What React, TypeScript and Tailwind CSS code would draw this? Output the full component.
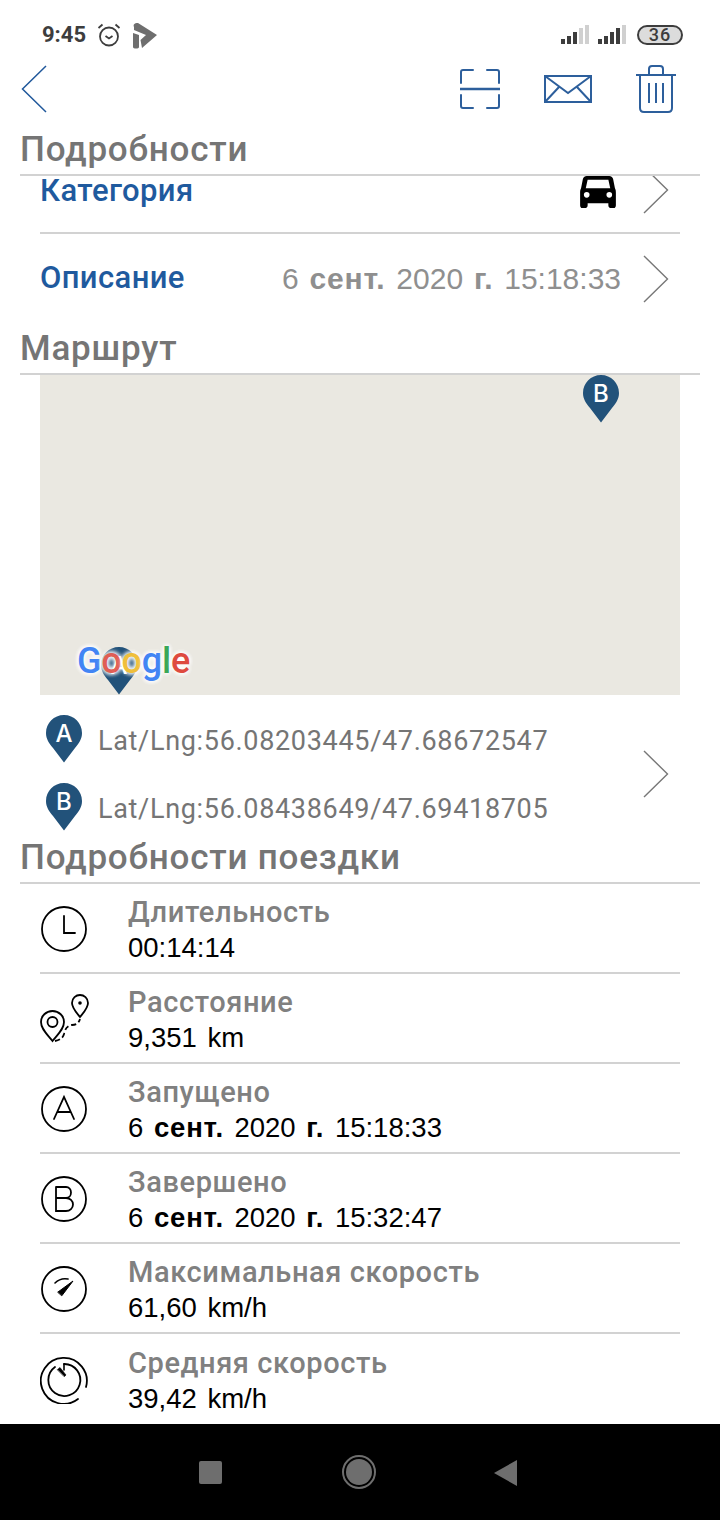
import type { ReactNode } from "react";

const roboto = "font-['Roboto',sans-serif]";
const helvetica = "font-['Liberation_Sans',Arial,sans-serif]";

function Chevron() {
  return (
    <svg width="26" height="48" viewBox="0 0 26 48" fill="none" stroke="#777777" strokeWidth="1.4">
      <path d="M1 1 L24.5 24 L1 47" />
    </svg>
  );
}

function Pin({ letter, size = 36 }: { letter: string; size?: number }) {
  return (
    <svg width={size} height={(size * 48) / 36} viewBox="0 0 36 48">
      <path d="M18 0 C8 0 0 8 0 18 C0 24 3 28 7 33 L18 47.500 L29 33 C33 28 36 24 36 18 C36 8 28 0 18 0 Z" fill="#22527a" />
      <text x="18" y="27" textAnchor="middle" fontFamily="Inter, sans-serif" fontWeight="500" fontSize="24" fill="#ffffff">
        {letter}
      </text>
    </svg>
  );
}

function Heading({ children }: { children: ReactNode }) {
  return (
    <div className="mx-5 border-b-2 border-[#d2d2d2] h-[38px] flex items-center shrink-0">
      <h2 className={`${roboto} text-[35px] leading-none font-medium tracking-[0.8px] text-[#757575] -mt-[13px]`}>{children}</h2>
    </div>
  );
}

function CircleIcon({ children }: { children: ReactNode }) {
  return (
    <svg width="48" height="48" viewBox="0 0 48 48" fill="none" stroke="#000000" strokeWidth="1.800" strokeLinecap="round">
      {children}
    </svg>
  );
}

const icons: Record<string, ReactNode> = {
  clock: (
    <CircleIcon>
      <circle cx="24" cy="24" r="22" />
      <path d="M24 11 V28 H35" />
    </CircleIcon>
  ),
  route: (
    <svg width="48" height="48" viewBox="0 0 48 48" fill="none" stroke="#000000" strokeWidth="1.800" className="overflow-visible">
      <path d="M12.500 46 C7 39 1 34 1 27 C1 21 6 16 12.500 16 C19 16 24 21 24 27 C24 34 18 39 12.500 46 Z" />
      <circle cx="12.500" cy="27" r="5" />
      <path d="M40 22 C36 17 32 13 32 8 C32 3 36 0 40 0 C44 0 48 3 48 8 C48 13 44 17 40 22 Z" />
      <circle cx="40" cy="8" r="1.800" fill="#000000" stroke="none" />
      <path d="M15 46 C20 45 23 43 24 39 C25 34 27 31 32 30 C36 30 39 28 40 24" strokeDasharray="5 3" />
    </svg>
  ),
  a: (
    <CircleIcon>
      <circle cx="24" cy="24" r="22" />
      <path d="M14 34 L24 12 L34 34 M17.500 27 H30.500" />
    </CircleIcon>
  ),
  b: (
    <CircleIcon>
      <circle cx="24" cy="24" r="22" />
      <path d="M16 12 V36 H26 C30 36 33 33 33 29.500 C33 26 30 23 26 23 H16 M26 23 C29 23 31 20.500 31 17.500 C31 14.500 29 12 26 12 H16" />
    </CircleIcon>
  ),
  gauge: (
    <CircleIcon>
      <circle cx="24" cy="24" r="22" />
      <path d="M15 18 C18 15 23 13 28 14" strokeWidth="1.600" />
      <path d="M18 27 L33 16 L22 30.500 Z" fill="#000000" strokeWidth="1" strokeLinejoin="round" />
    </CircleIcon>
  ),
  timer: (
    <CircleIcon>
      <path d="M46 31 A23 23 0 1 0 38 43" />
      <path d="M24 8 A16 16 0 1 1 15 11" />
      <path d="M24 8 V14" strokeWidth="1.600" />
      <path d="M17.500 13.500 L20 11.500 L26 19 L24.500 20.500 Z" fill="#000000" strokeWidth="0.600" />
    </CircleIcon>
  ),
};

function DateValue({ day, time, boldClass }: { day: string; time: string; boldClass: string }) {
  return (
    <>
      6 <b className={boldClass}>сент.</b> {day} <b className={boldClass}>г.</b> {time}
    </>
  );
}

function TripRow({ icon, label, children, last }: { icon: string; label: string; children: ReactNode; last?: boolean }) {
  return (
    <div className={`mx-10 h-[90px] flex items-center ${last ? "" : "border-b-2 border-[#d2d2d2]"}`}>
      <div className="w-[88px] shrink-0 mt-[2px]">{icons[icon]}</div>
      <div className="mt-[4px]">
        <div className={`${roboto} text-[29px] leading-[35px] font-medium tracking-[0.6px] text-[#808080]`}>{label}</div>
        <div className={`${helvetica} text-[27.5px] leading-[35px] [word-spacing:3px] text-black`}>{children}</div>
      </div>
    </div>
  );
}

export default function App() {
  return (
    <div className="w-[720px] h-[1520px] bg-white flex flex-col overflow-hidden">
      {/* status bar */}
      <div className="h-[58px] pt-[20px] pl-[42px] pr-[37px] flex items-start justify-between shrink-0">
        <div className="flex items-center gap-[11px] h-[30px]">
          <span className={`${roboto} text-[22px] font-bold text-[#3d3d3d] leading-none`}>9:45</span>
          <svg width="24" height="24" viewBox="0 0 24 24" fill="none" stroke="#3d3d3d" strokeWidth="1.800">
            <circle cx="12" cy="13.500" r="9" />
            <path d="M8.500 13 L12 15.500 L15.500 13 M1.500 5 L5.500 1.500 M22.500 5 L18.500 1.500" />
          </svg>
          <svg width="26" height="28" viewBox="0 0 26 28" className="mt-[1px]">
            <path d="M2 5 C1 3 2 1 6 1 L25 13 L10 26 L8.500 18 L14 13 L2 8 Z" fill="#6e6e6e" />
            <path d="M1 11 L7 13 V25 C7 27 1 27 1 25 Z" fill="#6e6e6e" />
          </svg>
        </div>
        <div className="flex items-center h-[30px]">
          <svg width="28" height="20" viewBox="0 0 28 20">
            <path d="M0 14 h4 v5 h-4 z M6 11 h4 v8 h-4 z M12 7 h4 v12 h-4 z" fill="#3d3d3d" />
            <path d="M18 3 h4 v16 h-4 z M24 0 h4 v19 h-4 z" fill="#d0d0d0" />
          </svg>
          <svg width="28" height="20" viewBox="0 0 28 20" className="ml-[9px]">
            <path d="M0 14 h4 v5 h-4 z M6 11 h4 v8 h-4 z M12 7 h4 v12 h-4 z M18 3 h4 v16 h-4 z" fill="#3d3d3d" />
            <path d="M24 0 h4 v19 h-4 z" fill="#d0d0d0" />
          </svg>
          <div className="ml-[11px] w-[46px] h-[20px] rounded-full border-2 border-[#3d3d3d] bg-[#dcdcdc] flex items-center justify-center">
            <span className={`${roboto} text-[18px] leading-none font-medium text-[#3d3d3d] tracking-[1px]`}>36</span>
          </div>
        </div>
      </div>

      {/* toolbar */}
      <div className="h-[80px] pt-[7px] pl-[21px] pr-[44px] flex items-start justify-between shrink-0">
        <svg width="26" height="48" viewBox="0 0 26 48" fill="none" stroke="#20589b" strokeWidth="1.500">
          <path d="M25 1 L1.500 24 L25 47" />
        </svg>
        <div className="flex items-center">
          <svg width="40" height="40" viewBox="0 0 40 40" fill="none" stroke="#2d5f9c" strokeWidth="2" strokeLinecap="round">
            <path d="M1 14 V3 C1 2 2 1 3 1 H13 M27 1 H37 C38 1 39 2 39 3 V14 M1 26 V37 C1 38 2 39 3 39 H13 M27 39 H37 C38 39 39 38 39 37 V26" />
            <path d="M0 20 H40" strokeWidth="2.500" strokeLinecap="butt" />
          </svg>
          <svg width="48" height="28" viewBox="0 0 48 28" fill="none" stroke="#2d5f9c" strokeWidth="2" className="ml-[44px]">
            <path d="M1 1 H47 V27 H1 Z M1 1 L24 18 L47 1 M1 27 L15 12 M47 27 L33 12" />
          </svg>
          <svg width="40" height="48" viewBox="0 0 40 48" fill="none" stroke="#2d5f9c" strokeWidth="2" className="ml-[44px]">
            <path d="M0 10 H40 M4 10 V43 C4 45 5 47 8 47 H32 C35 47 36 45 36 43 V10 M13 10 V4 C13 2 14 1 16 1 H24 C26 1 27 2 27 4 V10" />
            <path d="M13 18 V38 M20 18 V38 M27 18 V38" />
          </svg>
        </div>
      </div>

      <Heading>Подробности</Heading>

      {/* clipped category row */}
      <div className="mx-10 h-[58px] border-b-2 border-[#d2d2d2] flex justify-between overflow-hidden shrink-0">
        <span className={`${roboto} text-[31px] leading-[30px] tracking-[0.4px] font-medium text-[#1f5a9e]`}>Категория</span>
        <div className="flex">
          <svg width="36" height="32" viewBox="0 0 38 34">
            <path d="M7 0 H31 C33 0 34 1 35 3 L37 13 C38 15 38 16 38 18 V31 C38 33 37 34 36 34 H33 C31 34 30 33 30 31 V29 H8 V31 C8 33 7 34 5 34 H2 C1 34 0 33 0 31 V18 C0 16 0 15 1 13 L3 3 C4 1 5 0 7 0 Z" fill="#000000" />
            <path d="M8 4 H30 L32 13 H6 Z" fill="#ffffff" />
            <circle cx="7" cy="20" r="3" fill="#ffffff" />
            <circle cx="31" cy="20" r="3" fill="#ffffff" />
          </svg>
          <div className="ml-[27px] mr-[11px] mt-[-10px]">
            <Chevron />
          </div>
        </div>
      </div>

      <div className="mx-10 h-[103px] pb-[14px] flex items-center justify-between shrink-0">
        <span className={`${roboto} text-[31px] tracking-[0.4px] font-medium text-[#1f5a9e]`}>Описание</span>
        <div className="flex items-center">
          <span className={`${helvetica} text-[30px] [word-spacing:2.5px] text-[#8f8f8f]`}>
            <DateValue day="2020" time="15:18:33" boldClass="tracking-[0.8px]" />
          </span>
          <div className="ml-[22px] mr-[11px]">
            <Chevron />
          </div>
        </div>
      </div>

      <Heading>Маршрут</Heading>

      {/* map */}
      <div className="mx-10 h-[320px] bg-[#eae8e1] relative overflow-hidden shrink-0">
        <div className="absolute left-[543px] top-0">
          <Pin letter="B" />
        </div>
        <div className="absolute left-[61px] top-[272px]">
          <Pin letter="A" />
        </div>
        <div className={`${roboto} absolute left-[37px] top-[263px] text-[36px] leading-[46px] font-medium tracking-[-0.2px] [text-shadow:0_0_5px_#fff,0_0_5px_#fff,0_0_5px_#fff]`}>
          <span className="text-[#4285f4]">G</span>
          <span className="text-[#de4a3f]/90">o</span>
          <span className="text-[#f0b822]/90">o</span>
          <span className="text-[#4285f4]">g</span>
          <span className="text-[#3aa757]">l</span>
          <span className="text-[#de4a3f]">e</span>
        </div>
      </div>

      {/* route points */}
      <div className="mx-10 h-[151px] pt-[20px] flex items-start justify-between shrink-0">
        <div className="flex flex-col gap-[20px] ml-[6px]">
          <div className="flex items-center gap-[16px]">
            <Pin letter="A" />
            <span className={`${roboto} text-[27px] leading-[34px] text-[#757575] tracking-[0.68px] mt-[4px]`}>Lat/Lng:56.08203445/47.68672547</span>
          </div>
          <div className="flex items-center gap-[16px]">
            <Pin letter="B" />
            <span className={`${roboto} text-[27px] leading-[34px] text-[#757575] tracking-[0.68px] mt-[4px]`}>Lat/Lng:56.08438649/47.69418705</span>
          </div>
        </div>
        <div className="mr-[11px] mt-[35px]">
          <Chevron />
        </div>
      </div>

      <Heading>Подробности поездки</Heading>

      {/* trip details */}
      <div className="flex-1 min-h-0">
        <TripRow icon="clock" label="Длительность">00:14:14</TripRow>
        <TripRow icon="route" label="Расстояние">9,351 km</TripRow>
        <TripRow icon="a" label="Запущено">
          <DateValue day="2020" time="15:18:33" boldClass="tracking-[0.8px]" />
        </TripRow>
        <TripRow icon="b" label="Завершено">
          <DateValue day="2020" time="15:32:47" boldClass="tracking-[0.8px]" />
        </TripRow>
        <TripRow icon="gauge" label="Максимальная скорость">61,60 km/h</TripRow>
        <TripRow icon="timer" label="Средняя скорость" last>39,42 km/h</TripRow>
      </div>

      {/* android nav bar */}
      <div className="h-[96px] bg-black shrink-0 relative">
        <div className="absolute left-[199px] top-[37px] w-[23px] h-[23px] rounded-[2px] bg-[#6e6e6e]" />
        <div className="absolute left-[342px] top-[31px] w-[34px] h-[34px] rounded-full border-2 border-[#6e6e6e] flex items-center justify-center">
          <div className="w-[26px] h-[26px] rounded-full bg-[#6e6e6e]" />
        </div>
        <svg width="24" height="26" viewBox="0 0 24 26" className="absolute left-[494px] top-[36px]">
          <path d="M23 0 V26 L0 13 Z" fill="#6e6e6e" />
        </svg>
      </div>
    </div>
  );
}
